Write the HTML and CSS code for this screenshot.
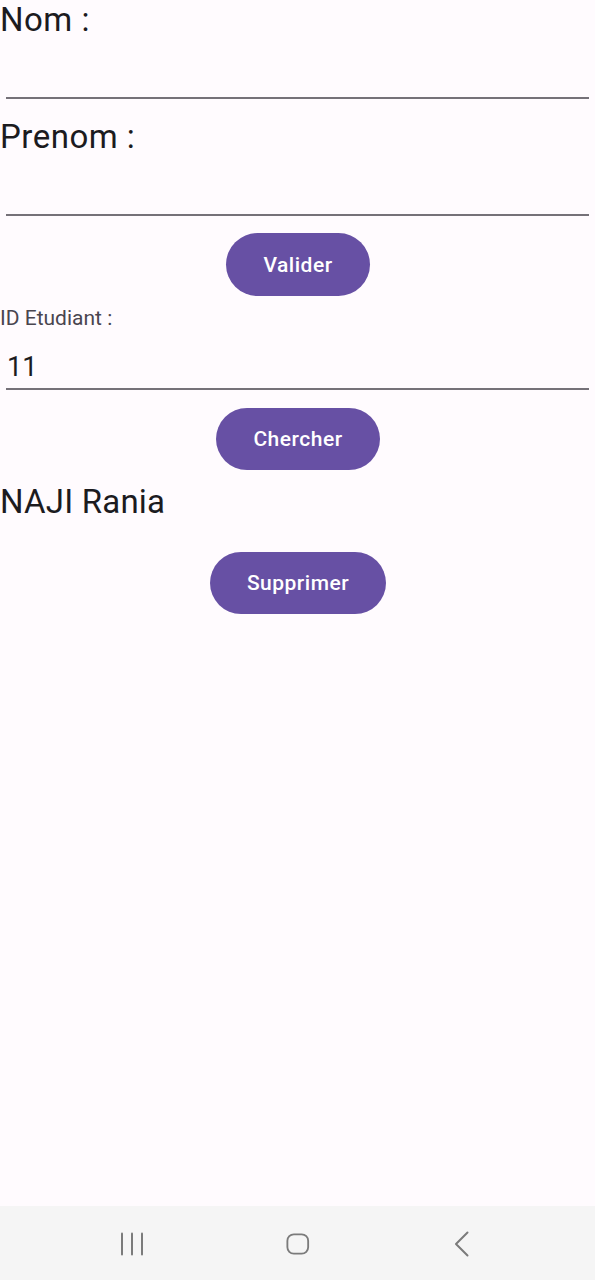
FILE: index.html
```html
<!DOCTYPE html>
<html lang="fr">
<head>
<meta charset="utf-8">
<title>Etudiant</title>
<link rel="stylesheet" href="styles.css">
</head>
<body>
<div class="screen">
  <main class="form">
    <div class="label-lg">Nom :</div>
    <div class="field"></div>
    <div class="label-lg label-prenom">Prenom :</div>
    <div class="field"></div>
    <div class="btn-row btn-valider"><button class="btn">Valider</button></div>
    <div class="label-sm">ID Etudiant :</div>
    <div class="field field-id"><span class="value">11</span></div>
    <div class="btn-row btn-chercher"><button class="btn">Chercher</button></div>
    <div class="result">NAJI Rania</div>
    <div class="btn-row btn-supprimer"><button class="btn">Supprimer</button></div>
  </main>
  <nav class="navbar">
    <span class="nav-item">
      <svg width="24" height="24" viewBox="0 0 24 24"><g stroke="#7b7b7b" stroke-width="2" stroke-linecap="round"><line x1="2" y1="1.5" x2="2" y2="22.5"/><line x1="12" y1="1.5" x2="12" y2="22.5"/><line x1="22" y1="1.5" x2="22" y2="22.5"/></g></svg>
    </span>
    <span class="nav-item">
      <svg width="26" height="24" viewBox="0 0 26 24"><rect x="1.5" y="1.5" width="22.5" height="21" rx="7" fill="none" stroke="#7b7b7b" stroke-width="2"/></svg>
    </span>
    <span class="nav-item">
      <svg width="24" height="26" viewBox="0 0 24 26"><polyline points="15.5,1.5 4,13 15.5,24.5" fill="none" stroke="#7b7b7b" stroke-width="2" stroke-linecap="round" stroke-linejoin="round"/></svg>
    </span>
  </nav>
</div>
</body>
</html>
```

FILE: styles.css
```css
* { box-sizing: border-box; }

html, body {
  margin: 0;
  padding: 0;
  background: #fffbfe;
}

body {
  font-family: Roboto, "Noto Sans", sans-serif;
  color: #1c1b1f;
}

.screen {
  display: flex;
  flex-direction: column;
  height: 1280px;
  width: 595px;
}

.form {
  flex: 1;
  display: flex;
  flex-direction: column;
}

.label-lg {
  font-size: 33px;
  line-height: 39px;
  letter-spacing: 0.5px;
}

.label-prenom {
  margin-top: 18px;
}

.field {
  margin: 0 6px;
  height: 60px;
  border-bottom: 2px solid #757178;
  display: flex;
  align-items: flex-end;
}

.btn-row {
  display: flex;
  justify-content: center;
}

.btn {
  height: 63px;
  padding: 0 37px;
  border: none;
  border-radius: 32px;
  background: #6750a4;
  color: #ffffff;
  font-family: Roboto, sans-serif;
  font-weight: 500;
  font-size: 21px;
  letter-spacing: 0.5px;
  margin-left: 1px;
}

.btn-valider { margin-top: 17px; }
.btn-chercher { margin-top: 18px; }
.btn-supprimer { margin-top: 31px; }

.btn-chercher .btn { height: 62px; }
.btn-supprimer .btn { height: 62px; }

.label-sm {
  margin-top: 10px;
  font-size: 21px;
  line-height: 25px;
  color: #49454f;
}

.field-id {
  height: 59px;
}

.value {
  font-size: 27px;
  line-height: 32px;
  padding-left: 1px;
  margin-bottom: 5px;
}

.result {
  margin-top: 12px;
  font-size: 33px;
  line-height: 39px;
  letter-spacing: 0.2px;
}

.navbar {
  height: 74px;
  background: #f5f5f5;
  display: flex;
  justify-content: center;
  align-items: center;
  gap: 142px;
  padding-top: 2px;
}

.nav-item {
  width: 24px;
  display: flex;
  justify-content: center;
  align-items: center;
}

.nav-item svg { display: block; }
```
